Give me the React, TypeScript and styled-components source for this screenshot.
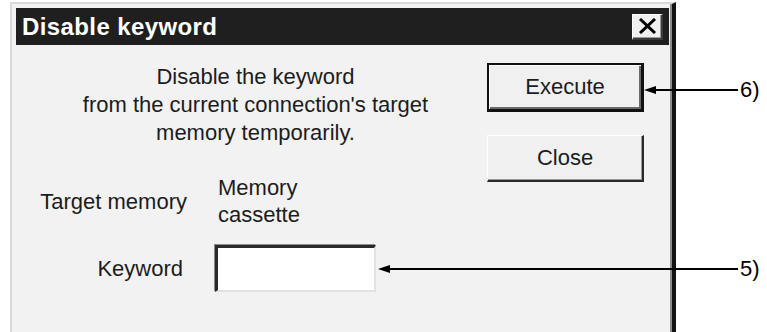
import React from "react";
import styled, { createGlobalStyle } from "styled-components";

const Global = createGlobalStyle`
  html, body { margin: 0; padding: 0; background: #ffffff; overflow: hidden; }
  body { font-family: "Liberation Sans", Arial, sans-serif; }
`;

const Page = styled.div`
  width: 767px;
  height: 332px;
  box-sizing: border-box;
  padding: 2px 0 0 10px;
  overflow: hidden;
`;

const Dialog = styled.div`
  width: 666px;
  height: 360px;
  box-sizing: border-box;
  background: #f2f2f2;
  border-top: 2px solid #dadada;
  border-left: 2px solid #dadada;
  border-right: 4px solid #121212;
  box-shadow: inset -2px 0 0 #8a8a8a;
  padding: 4px 3px 0 4px;
  display: flex;
  flex-direction: column;
`;

const TitleBar = styled.div`
  height: 37px;
  flex: none;
  background: #1f1f1f;
  display: flex;
  align-items: center;
  justify-content: space-between;
  padding: 0 6px;
`;

const Title = styled.div`
  color: #ffffff;
  font-weight: bold;
  font-size: 24px;
  letter-spacing: 0.4px;
  line-height: 1;
`;

const CloseBox = styled.div`
  width: 31px;
  height: 26px;
  box-sizing: border-box;
  background: #f0f0f0;
  border-style: solid;
  border-width: 1px 2px 2px 1px;
  border-color: #ffffff #3a3a3a #3a3a3a #ffffff;
  box-shadow: inset -1px -1px 0 #9a9a9a;
  display: flex;
  align-items: center;
  justify-content: center;
`;

const Content = styled.div`
  display: flex;
  padding: 18px 25px 0 0;
`;

const LeftCol = styled.div`
  flex: 1;
  display: flex;
  flex-direction: column;
  color: #1c1c1c;
  font-size: 22px;
`;

const Message = styled.div`
  text-align: center;
  line-height: 28px;
  padding-left: 8px;
`;

const InfoGrid = styled.div`
  display: grid;
  grid-template-columns: 171px 1fr;
  column-gap: 28px;
  row-gap: 17px;
  align-items: center;
  margin-top: 27px;
  line-height: 27px;
`;

const Label = styled.div<{ $pad?: number }>`
  text-align: right;
  padding-right: ${(p) => p.$pad ?? 0}px;
`;

const Value = styled.div`
  padding-left: 3px;
`;

const Anchor = styled.div`
  position: relative;
  width: fit-content;
`;

const TextBox = styled.div`
  width: 161px;
  height: 47px;
  box-sizing: border-box;
  background: #ffffff;
  border-style: solid;
  border-width: 3px 2px 2px 3px;
  border-color: #2a2a2a #e2e2e2 #e2e2e2 #2a2a2a;
  box-shadow: -1px -1px 0 #8a8a8a;
`;

const ButtonCol = styled.div`
  width: 157px;
  flex: none;
  display: flex;
  flex-direction: column;
  gap: 23px;
`;

const Button = styled.div<{ $default?: boolean }>`
  height: ${(p) => (p.$default ? 49 : 47)}px;
  width: 157px;
  box-sizing: border-box;
  background: #f0f0f0;
  display: flex;
  align-items: center;
  justify-content: center;
  font-size: 22px;
  color: #1c1c1c;
  border-style: solid;
  ${(p) =>
    p.$default
      ? `border-width: 2px 3px 3px 2px;
         border-color: #111111;
         box-shadow: inset 1px 1px 0 #ffffff, inset -2px -2px 0 #6a6a6a;`
      : `border-width: 1px 2px 2px 1px;
         border-color: #ffffff #2a2a2a #2a2a2a #ffffff;
         box-shadow: inset -1px -1px 0 #9a9a9a;`}
`;

const CalloutWrap = styled.div<{ $dy: number; $gap: number }>`
  position: absolute;
  left: 100%;
  top: calc(50% + ${(p) => p.$dy}px);
  transform: translateY(-50%);
  margin-left: ${(p) => p.$gap}px;
  display: flex;
  align-items: center;
  gap: 2px;
  pointer-events: none;
`;

const CalloutLabel = styled.span`
  font-family: "Liberation Sans", Arial, sans-serif;
  font-size: 22px;
  line-height: 1;
  color: #000;
`;

function Callout({ length, label, dy = 0, gap = 0 }: { length: number; label: string; dy?: number; gap?: number }) {
  return (
    <CalloutWrap $dy={dy} $gap={gap}>
      <svg width={length} height={10} viewBox={`0 0 ${length} 10`} style={{ display: "block" }}>
        <polygon points="0,5 12,1 12,9" fill="#000" />
        <line x1={10} y1={5} x2={length} y2={5} stroke="#000" strokeWidth={2} />
      </svg>
      <CalloutLabel>{label}</CalloutLabel>
    </CalloutWrap>
  );
}

export default function App() {
  return (
    <>
      <Global />
      <Page>
        <Dialog>
          <TitleBar>
            <Title>Disable keyword</Title>
            <CloseBox>
              <svg width="19" height="16" viewBox="0 0 19 16">
                <path d="M2 1 L17 15 M17 1 L2 15" stroke="#000" strokeWidth="3" />
              </svg>
            </CloseBox>
          </TitleBar>
          <Content>
            <LeftCol>
              <Message>
                Disable the keyword
                <br />
                from the current connection's target
                <br />
                memory temporarily.
              </Message>
              <InfoGrid>
                <Label>Target memory</Label>
                <Value>
                  Memory
                  <br />
                  cassette
                </Value>
                <Label $pad={4}>Keyword</Label>
                <Anchor>
                  <TextBox />
                  <Callout length={360} label="5)" gap={2} />
                </Anchor>
              </InfoGrid>
            </LeftCol>
            <ButtonCol>
              <Anchor>
                <Button $default>Execute</Button>
                <Callout length={94} label="6)" dy={2} />
              </Anchor>
              <Button>Close</Button>
            </ButtonCol>
          </Content>
        </Dialog>
      </Page>
    </>
  );
}
